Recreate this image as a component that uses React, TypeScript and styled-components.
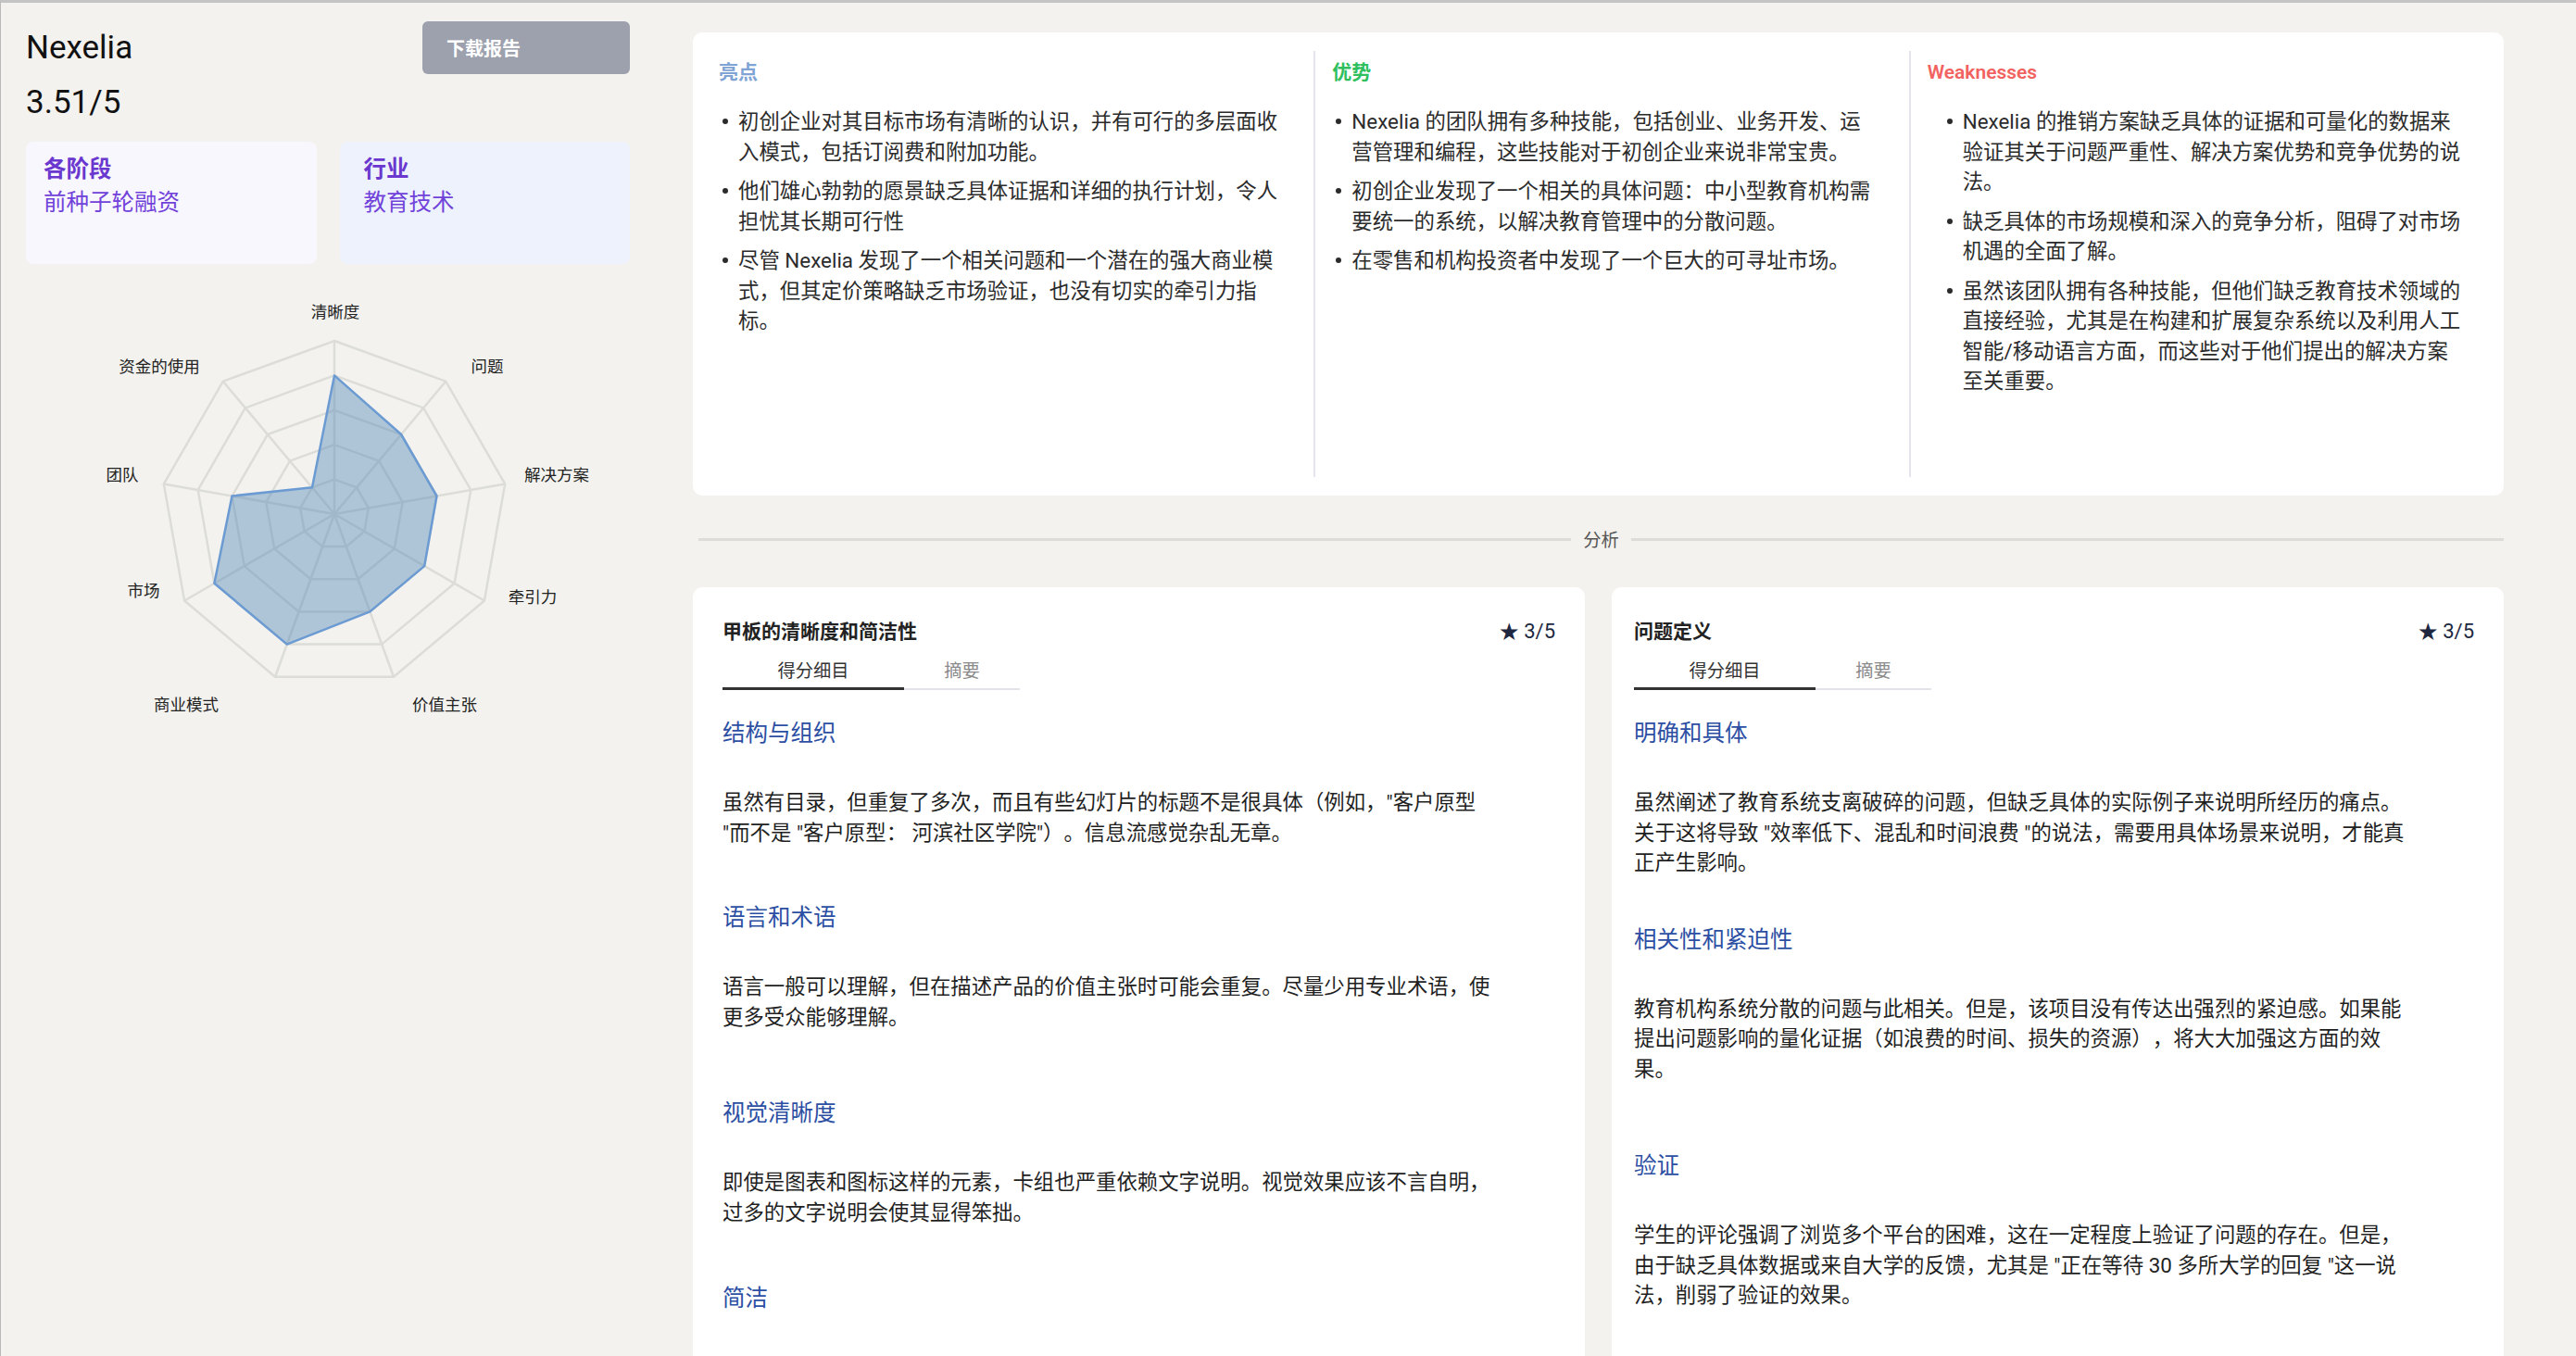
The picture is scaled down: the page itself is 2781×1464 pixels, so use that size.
import styled, { createGlobalStyle } from "styled-components";

const GlobalStyle = createGlobalStyle`
  * {
    box-sizing: border-box;
  }

  html,
  body {
    margin: 0;
  }

  body {
    background: #f3f2ee;
    border-top: 3px solid #c4c4c4;
    border-left: 1px solid #b9b9b9;
    font-family: Roboto, "Noto Sans CJK SC", sans-serif;
    color: #222;
    text-spacing-trim: space-all;
  }
`;

const radarAxes = [
  { label: "清晰度", value: 4, lx: 334, ly: 37 },
  { label: "问题", value: 3, lx: 498, ly: 96 },
  { label: "解决方案", value: 3, lx: 573, ly: 213 },
  { label: "牵引力", value: 3, lx: 547, ly: 345 },
  { label: "价值主张", value: 3, lx: 452, ly: 461 },
  { label: "商业模式", value: 4, lx: 173, ly: 461 },
  { label: "市场", value: 4, lx: 127, ly: 338 },
  { label: "团队", value: 3, lx: 104, ly: 213 },
  { label: "资金的使用", value: 1, lx: 144, ly: 96 },
];

const summaryColumns = [
  {
    title: "亮点",
    color: "#7ea3d4",
    indent: 21,
    trail: 36,
    items: [
      "初创企业对其目标市场有清晰的认识，并有可行的多层面收入模式，包括订阅费和附加功能。",
      "他们雄心勃勃的愿景缺乏具体证据和详细的执行计划，令人担忧其长期可行性",
      "尽管 Nexelia 发现了一个相关问题和一个潜在的强大商业模式，但其定价策略缺乏市场验证，也没有切实的牵引力指标。",
    ],
  },
  {
    title: "优势",
    color: "#2fbf5e",
    indent: 21,
    trail: 36,
    items: [
      "Nexelia 的团队拥有多种技能，包括创业、业务开发、运营管理和编程，这些技能对于初创企业来说非常宝贵。",
      "初创企业发现了一个相关的具体问题：中小型教育机构需要统一的系统，以解决教育管理中的分散问题。",
      "在零售和机构投资者中发现了一个巨大的可寻址市场。",
    ],
  },
  {
    title: "Weaknesses",
    color: "#f26260",
    indent: 38,
    trail: 42,
    items: [
      "Nexelia 的推销方案缺乏具体的证据和可量化的数据来验证其关于问题严重性、解决方案优势和竞争优势的说法。",
      "缺乏具体的市场规模和深入的竞争分析，阻碍了对市场机遇的全面了解。",
      "虽然该团队拥有各种技能，但他们缺乏教育技术领域的直接经验，尤其是在构建和扩展复杂系统以及利用人工智能/移动语言方面，而这些对于他们提出的解决方案至关重要。",
    ],
  },
];

const detailCards = [
  {
    title: "甲板的清晰度和简洁性",
    score: "3/5",
    inset: 32,
    sections: [
      {
        heading: "结构与组织",
        text: "虽然有目录，但重复了多次，而且有些幻灯片的标题不是很具体（例如，\"客户原型\u200B\"而不是 \"客户原型： 河滨社区学院\"）。信息流感觉杂乱无章。",
        after: 60,
      },
      {
        heading: "语言和术语",
        text: "语言一般可以理解，但在描述产品的价值主张时可能会重复。尽量少用专业术语，使更多受众能够理解。",
        after: 72,
      },
      {
        heading: "视觉清晰度",
        text: "即使是图表和图标这样的元素，卡组也严重依赖文字说明。视觉效果应该不言自明，过多的文字说明会使其显得笨拙。",
        after: 61,
      },
      {
        heading: "简洁",
        text: "部分幻灯片信息过多，可以进一步精简，突出最关键的要点。",
        after: 40,
      },
    ],
  },
  {
    title: "问题定义",
    score: "3/5",
    inset: 24,
    sections: [
      {
        heading: "明确和具体",
        text: "虽然阐述了教育系统支离破碎的问题，但缺乏具体的实际例子来说明所经历的痛点。关于这将导致 \"效率低下、混乱和时间浪费 \"的说法，需要用具体场景来说明，才能真正产生影响。",
        after: 51,
      },
      {
        heading: "相关性和紧迫性",
        text: "教育机构系统分散的问题与此相关。但是，该项目没有传达出强烈的紧迫感。如果能提出问题影响的量化证据（如浪费的时间、损失的资源），将大大加强这方面的效果。",
        after: 73,
      },
      {
        heading: "验证",
        text: "学生的评论强调了浏览多个平台的困难，这在一定程度上验证了问题的存在。但是，由于缺乏具体数据或来自大学的反馈，尤其是 \"正在等待 30 多所大学的回复 \"这一说法，削弱了验证的效果。",
        after: 40,
      },
    ],
  },
];

const CX = 333;
const CY = 255;
const R = 187;

function point(i: number, r: number) {
  const a = (Math.PI * 2 * i) / radarAxes.length;
  return `${(CX + r * Math.sin(a)).toFixed(1)},${(CY - r * Math.cos(a)).toFixed(1)}`;
}

function RadarChart() {
  const rings = [1, 2, 3, 4, 5];
  const dataPoints = radarAxes.map((axis, i) => point(i, (R * axis.value) / 5)).join(" ");

  return (
    <RadarSvg width="652" height="480" viewBox="0 0 652 480">
      {rings.map((ring) => (
        <polygon
          key={ring}
          points={radarAxes.map((_, i) => point(i, (R * ring) / 5)).join(" ")}
          fill="none"
          stroke="#dcdcd8"
          strokeWidth="2.5"
        />
      ))}
      {radarAxes.map((axis, i) => {
        const [x, y] = point(i, R).split(",");
        return <line key={axis.label} x1={CX} y1={CY} x2={x} y2={y} stroke="#dcdcd8" strokeWidth="2.5" />;
      })}
      <polygon
        points={dataPoints}
        fill="rgba(70, 130, 180, 0.4)"
        stroke="#6b9bd2"
        strokeWidth="2.5"
        strokeLinejoin="round"
      />
      {radarAxes.map((axis) => (
        <AxisLabel key={axis.label} x={axis.lx} y={axis.ly} textAnchor="middle" dominantBaseline="central">
          {axis.label}
        </AxisLabel>
      ))}
    </RadarSvg>
  );
}

export default function App() {
  return (
    <>
      <GlobalStyle />
      <Page>
        <Sidebar>
          <Header>
            <CompanyName>Nexelia</CompanyName>
            <DownloadButton type="button">下载报告</DownloadButton>
          </Header>
          <TotalScore>3.51/5</TotalScore>
          <InfoGrid>
            <InfoCard $bg="#f9f7fe" $padX={19}>
              <InfoTitle>各阶段</InfoTitle>
              <InfoValue>前种子轮融资</InfoValue>
            </InfoCard>
            <InfoCard $bg="#edf2fc" $padX={26}>
              <InfoTitle>行业</InfoTitle>
              <InfoValue>教育技术</InfoValue>
            </InfoCard>
          </InfoGrid>
          <RadarChart />
        </Sidebar>

        <Main>
          <SummaryCard>
            {summaryColumns.map((col, i) => (
              <Column key={col.title} $divider={i > 0} $trail={col.trail}>
                <ColumnTitle $color={col.color}>{col.title}</ColumnTitle>
                <BulletList $indent={col.indent}>
                  {col.items.map((item) => (
                    <BulletItem key={item}>{item}</BulletItem>
                  ))}
                </BulletList>
              </Column>
            ))}
          </SummaryCard>

          <DividerRow>
            <DividerLine />
            <DividerLabel>分析</DividerLabel>
            <DividerLine />
          </DividerRow>

          <DetailGrid>
            {detailCards.map((card) => (
              <DetailCard key={card.title} $inset={card.inset}>
                <DetailHead>
                  <DetailTitle>{card.title}</DetailTitle>
                  <DetailScore>
                    <Star>★</Star> {card.score}
                  </DetailScore>
                </DetailHead>
                <TabBar>
                  <Tab $active $width={196}>得分细目</Tab>
                  <Tab $width={125}>摘要</Tab>
                </TabBar>
                <SectionList>
                  {card.sections.map((s) => (
                    <Section key={s.heading} $after={s.after}>
                      <SectionHeading>{s.heading}</SectionHeading>
                      <SectionText>{s.text}</SectionText>
                    </Section>
                  ))}
                </SectionList>
              </DetailCard>
            ))}
          </DetailGrid>
        </Main>
      </Page>
    </>
  );
}

const Page = styled.div`
  display: flex;
  align-items: flex-start;
`;

const Sidebar = styled.aside`
  flex: none;
  width: 747px;
  padding: 20px 68px 0 27px;
`;

const Header = styled.div`
  display: flex;
  align-items: center;
  justify-content: space-between;
  height: 57px;
`;

const CompanyName = styled.h1`
  margin: 0;
  font-size: 35px;
  font-weight: 400;
  line-height: 1;
  color: #111;
`;

const DownloadButton = styled.button`
  width: 224px;
  height: 57px;
  padding: 0 0 0 26px;
  border: none;
  border-radius: 6px;
  background: #9ca1ad;
  color: #fff;
  font-family: inherit;
  font-size: 20px;
  font-weight: 700;
  text-align: left;
`;

const TotalScore = styled.div`
  margin-top: 11px;
  font-size: 35px;
  line-height: 40px;
  color: #111;
`;

const InfoGrid = styled.div`
  display: grid;
  grid-template-columns: 1fr 1fr;
  gap: 25px;
  margin-top: 22px;
`;

const InfoCard = styled.div<{ $bg: string; $padX: number }>`
  height: 132px;
  padding: 12px ${({ $padX }) => $padX}px;
  border-radius: 8px;
  background: ${({ $bg }) => $bg};
`;

const InfoTitle = styled.div`
  font-size: 24.5px;
  font-weight: 700;
  line-height: 36px;
  color: #6a38cf;
`;

const InfoValue = styled.div`
  font-size: 24.5px;
  line-height: 36px;
  color: #7142da;
`;

const RadarSvg = styled.svg`
  display: block;
  margin-top: 15px;
`;

const AxisLabel = styled.text`
  font-family: Roboto, "Noto Sans CJK SC", sans-serif;
  font-size: 17.5px;
  fill: #222;
`;

const Main = styled.main`
  flex: 1;
  min-width: 0;
  padding: 32px 78px 0 0;
`;

const SummaryCard = styled.section`
  display: grid;
  grid-template-columns: repeat(3, 1fr);
  padding: 20px 0 20px 28px;
  border-radius: 10px;
  background: #fff;
`;

const Column = styled.div<{ $divider?: boolean; $trail: number }>`
  min-height: 460px;
  padding: 9px ${({ $trail }) => $trail}px 0 ${({ $divider }) => ($divider ? "18px" : "0")};
  border-left: ${({ $divider }) => ($divider ? "2px solid #e4e4ef" : "none")};
`;

const ColumnTitle = styled.h2<{ $color: string }>`
  margin: 0;
  font-size: 21px;
  font-weight: 600;
  line-height: 28px;
  color: ${({ $color }) => $color};
`;

const BulletList = styled.ul<{ $indent: number }>`
  margin: 23px 0 0;
  padding-left: ${({ $indent }) => $indent}px;
  list-style: none;
`;

const BulletItem = styled.li`
  position: relative;
  margin-bottom: 10px;
  font-size: 22.4px;
  line-height: 32.5px;
  color: #2b2b2b;

  &::before {
    content: "";
    position: absolute;
    top: 13px;
    left: -17px;
    width: 6px;
    height: 6px;
    border-radius: 50%;
    background: #2b2b2b;
  }
`;

const DividerRow = styled.div`
  display: flex;
  align-items: center;
  gap: 13px;
  height: 30px;
  margin-top: 32px;
  padding-left: 6px;
`;

const DividerLine = styled.div`
  flex: 1;
  height: 3px;
  background: #dddcd8;
`;

const DividerLabel = styled.span`
  font-size: 19.25px;
  color: #555;
`;

const DetailGrid = styled.div`
  display: grid;
  grid-template-columns: 1fr 1fr;
  gap: 29px;
  align-items: start;
  margin-top: 37px;
`;

const DetailCard = styled.article<{ $inset: number }>`
  padding: 36px 32px 40px ${({ $inset }) => $inset}px;
  border-radius: 10px;
  background: #fff;
`;

const DetailHead = styled.div`
  display: flex;
  align-items: center;
  justify-content: space-between;
`;

const DetailTitle = styled.h3`
  margin: 0;
  font-size: 21px;
  font-weight: 700;
  line-height: 24px;
  color: #222;
`;

const DetailScore = styled.span`
  font-size: 22px;
  line-height: 24px;
  color: #1e2740;
`;

const Star = styled.span`
  font-size: 21px;
`;

const TabBar = styled.div`
  display: flex;
  align-items: flex-end;
  margin-top: 19px;
`;

const Tab = styled.div<{ $active?: boolean; $width: number }>`
  width: ${({ $width }) => $width}px;
  padding-bottom: ${({ $active }) => ($active ? "5px" : "6px")};
  border-bottom: ${({ $active }) => ($active ? "3px solid #333" : "2px solid #e3e3ea")};
  font-size: 19.25px;
  line-height: 24px;
  text-align: center;
  color: ${({ $active }) => ($active ? "#333" : "#8a8a8a")};
`;

const SectionList = styled.div`
  margin-top: 31px;
`;

const Section = styled.section<{ $after: number }>`
  margin-bottom: ${({ $after }) => $after}px;
`;

const SectionHeading = styled.h4`
  margin: 0;
  font-size: 24.5px;
  font-weight: 400;
  line-height: 32px;
  color: #2c4fa3;
`;

const SectionText = styled.p`
  max-width: 840px;
  margin: 42px 0 0;
  font-size: 22.4px;
  line-height: 32.5px;
  color: #1f1f1f;
`;
